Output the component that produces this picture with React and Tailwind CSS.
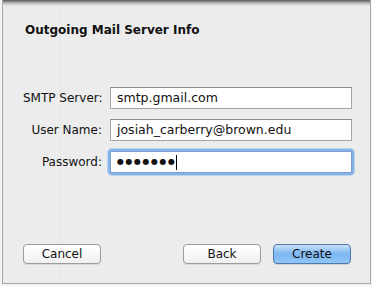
export default function App() {
  const font = { fontFamily: '"DejaVu Sans", "Liberation Sans", sans-serif' };

  return (
    <div className="w-[372px] h-[286px] bg-[#f4f4f4] overflow-hidden" style={font}>
      <div className="relative ml-[2px] w-[369px] h-[284px] bg-[#ececec] border-l border-r border-b border-[#a9a9a9]">
        {/* top shadow from title bar */}
        <div className="absolute top-0 left-0 right-0 h-[6px] bg-gradient-to-b from-[#5a5a5a] via-[#b8b8b8] to-[#ececec]" />
        {/* faint line from window behind */}
        <div className="absolute top-[6px] bottom-0 left-[57px] w-px bg-[#e6e6e6]" />

        <div className="relative flex flex-col h-full pl-[22px] pr-[19px]">
          <h1 className="mt-[22px] text-[12px] font-bold leading-[16px] text-[#111]">
            Outgoing Mail Server Info
          </h1>

          <div className="mt-[49px] grid grid-cols-[79px_242px] gap-x-[8px] gap-y-[10px] items-center -ml-[2px]">
            <label className="text-right text-[12px] text-[#111] whitespace-nowrap">SMTP Server:</label>
            <div className="h-[22px] bg-white border border-[#a3a3a3] border-t-[#8d8d8d] flex items-center px-[6px] text-[12.5px] text-[#111]">
              smtp.gmail.com
            </div>

            <label className="text-right text-[12px] text-[#111] whitespace-nowrap">User Name:</label>
            <div className="h-[22px] bg-white border border-[#a3a3a3] border-t-[#8d8d8d] flex items-center px-[6px] text-[12.5px] text-[#111]">
              josiah_carberry@brown.edu
            </div>

            <label className="text-right text-[12px] text-[#111] whitespace-nowrap">Password:</label>
            <div className="h-[22px] bg-white border border-[#7c9fcf] rounded-[2px] shadow-[0_0_0_2px_#86b3e6,0_0_0_3px_#b9d3f0] flex items-center px-[6px] text-[#111]">
              <span className="text-[8px] tracking-[1.5px] leading-none font-bold">●●●●●●●</span>
              <span className="w-px h-[15px] bg-black" />
            </div>
          </div>

          <div className="mt-auto mb-[19px] -ml-[2px] flex items-center">
            <button className="w-[78px] h-[20px] rounded-[4px] border border-[#9b9b9b] bg-gradient-to-b from-white to-[#f0f0f0] text-[12px] text-[#111] leading-none shadow-[0_1px_0_#d8d8d8]">
              Cancel
            </button>
            <button className="ml-auto w-[78px] h-[20px] rounded-[4px] border border-[#9b9b9b] bg-gradient-to-b from-white to-[#f0f0f0] text-[12px] text-[#111] leading-none shadow-[0_1px_0_#d8d8d8]">
              Back
            </button>
            <button className="ml-[12px] w-[78px] h-[20px] rounded-[4px] border border-[#4f78ae] bg-gradient-to-b from-[#c6e0fa] via-[#7db7f2] to-[#8fc6f6] text-[12px] text-[#111] leading-none shadow-[0_1px_0_#d0d0d0]">
              Create
            </button>
          </div>
        </div>
      </div>
    </div>
  );
}
